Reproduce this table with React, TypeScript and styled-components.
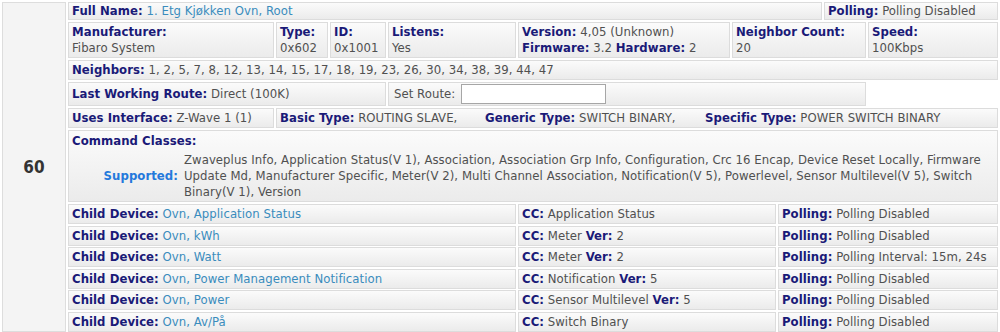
import React from 'react';
import styled, { createGlobalStyle } from 'styled-components';

const GlobalStyle = createGlobalStyle`
  html, body {
    margin: 0;
    padding: 0;
    background: #ffffff;
  }
  body {
    font-family: "DejaVu Sans Condensed", "DejaVu Sans", sans-serif;
    font-size: 13px;
    letter-spacing: 0.05px;
    color: #505050;
  }
  * { box-sizing: border-box; }
`;

const Page = styled.div`
  display: flex;
  gap: 2px;
  padding: 2px;
  width: 1000px;
`;

const IdCell = styled.div`
  width: 64px;
  flex: none;
  display: flex;
  align-items: center;
  justify-content: center;
  background: #f4f4f4;
  border: 1px solid #dddddd;
  font-weight: bold;
  font-size: 17px;
  color: #333333;
`;

const Body = styled.div`
  flex: 1;
  display: flex;
  flex-direction: column;
  gap: 2px;
`;

const Row = styled.div<{ $tight?: boolean }>`
  display: flex;
  gap: 2px;
  margin-top: ${p => (p.$tight ? '-0.4px' : '0')};
`;

const Cell = styled.div<{ $w?: number; $pad?: string }>`
  width: ${p => (p.$w ? `${p.$w}px` : 'auto')};
  flex: ${p => (p.$w ? 'none' : '1')};
  padding: ${p => p.$pad ?? '1px 3px'};
  line-height: 16px;
  white-space: nowrap;
  background: linear-gradient(to bottom, #fbfbfb 0%, #ebebeb 100%);
  border: 1px solid #dcdcdc;
`;

const Blank = styled.div<{ $w: number }>`
  width: ${p => p.$w}px;
  flex: none;
`;

const Label = styled.span`
  font-weight: bold;
  color: #1a1a78;
`;

const Value = styled.span`
  color: #505050;
`;

const Link = styled.span`
  color: #3a8cbd;
`;

const Line = styled.div``;

const RouteCell = styled(Cell)`
  display: flex;
  align-items: center;
  gap: 6px;
`;

const RouteInput = styled.input`
  width: 145px;
  height: 20px;
  border: 1px solid #a6a6a6;
  background: #ffffff;
  padding: 0 3px;
  margin: 0;
  font: inherit;
`;

const TypeCell = styled(Cell)`
  display: flex;
`;

const TypeItem = styled.span<{ $w?: number }>`
  width: ${p => (p.$w ? `${p.$w}px` : 'auto')};
  flex: none;
`;

const ClassesCell = styled(Cell)`
  padding: 2px 3px 1px;
  white-space: normal;
`;

const ClassesGrid = styled.div`
  display: grid;
  grid-template-columns: 106px 1fr;
  column-gap: 6px;
  margin-top: 3px;
`;

const Supported = styled.div`
  align-self: center;
  text-align: right;
  font-weight: bold;
  color: #2479dc;
`;

const ClassList = styled.div`
  color: #505050;
`;

const children = [
  { name: 'Ovn, Application Status', cc: 'Application Status', ver: '', poll: 'Polling Disabled' },
  { name: 'Ovn, kWh', cc: 'Meter', ver: '2', poll: 'Polling Disabled' },
  { name: 'Ovn, Watt', cc: 'Meter', ver: '2', poll: 'Polling Interval: 15m, 24s' },
  { name: 'Ovn, Power Management Notification', cc: 'Notification', ver: '5', poll: 'Polling Disabled' },
  { name: 'Ovn, Power', cc: 'Sensor Multilevel', ver: '5', poll: 'Polling Disabled' },
  { name: 'Ovn, Av/På', cc: 'Switch Binary', ver: '', poll: 'Polling Disabled' },
];

const classes =
  'Zwaveplus Info, Application Status(V 1), Association, Association Grp Info, Configuration, Crc 16 Encap, Device Reset Locally, Firmware Update Md, Manufacturer Specific, Meter(V 2), Multi Channel Association, Notification(V 5), Powerlevel, Sensor Multilevel(V 5), Switch Binary(V 1), Version';

const neighbors = [1, 2, 5, 7, 8, 12, 13, 14, 15, 17, 18, 19, 23, 26, 30, 34, 38, 39, 44, 47];

export default function App() {
  return (
    <>
      <GlobalStyle />
      <Page>
        <IdCell>60</IdCell>
        <Body>
          <Row>
            <Cell $w={754} $pad="0 3px">
              <Label>Full Name:</Label> <Link>1. Etg Kjøkken Ovn, Root</Link>
            </Cell>
            <Cell $w={174} $pad="0 3px">
              <Label>Polling:</Label> <Value>Polling Disabled</Value>
            </Cell>
          </Row>

          <Row>
            <Cell $w={206}>
              <Line><Label>Manufacturer:</Label></Line>
              <Line>Fibaro System</Line>
            </Cell>
            <Cell $w={52}>
              <Line><Label>Type:</Label></Line>
              <Line>0x602</Line>
            </Cell>
            <Cell $w={56}>
              <Line><Label>ID:</Label></Line>
              <Line>0x1001</Line>
            </Cell>
            <Cell $w={128}>
              <Line><Label>Listens:</Label></Line>
              <Line>Yes</Line>
            </Cell>
            <Cell $w={212}>
              <Line><Label>Version:</Label> 4,05 (Unknown)</Line>
              <Line><Label>Firmware:</Label> 3.2 <Label>Hardware:</Label> 2</Line>
            </Cell>
            <Cell $w={134}>
              <Line><Label>Neighbor Count:</Label></Line>
              <Line>20</Line>
            </Cell>
            <Cell $w={130}>
              <Line><Label>Speed:</Label></Line>
              <Line>100Kbps</Line>
            </Cell>
          </Row>

          <Row>
            <Cell>
              <Label>Neighbors:</Label> {neighbors.join(', ')}
            </Cell>
          </Row>

          <Row>
            <RouteCell $w={318}>
              <span><Label>Last Working Route:</Label> Direct (100K)</span>
            </RouteCell>
            <RouteCell $w={478} $pad="1px 5px">
              <span>Set Route:</span>
              <RouteInput type="text" />
            </RouteCell>
            <Blank $w={130} />
          </Row>

          <Row>
            <Cell $w={206}>
              <Label>Uses Interface:</Label> Z-Wave 1 (1)
            </Cell>
            <TypeCell>
              <TypeItem $w={205}><Label>Basic Type:</Label> ROUTING SLAVE,</TypeItem>
              <TypeItem $w={220}><Label>Generic Type:</Label> SWITCH BINARY,</TypeItem>
              <TypeItem><Label>Specific Type:</Label> POWER SWITCH BINARY</TypeItem>
            </TypeCell>
          </Row>

          <Row>
            <ClassesCell>
              <Label>Command Classes:</Label>
              <ClassesGrid>
                <Supported>Supported:</Supported>
                <ClassList>{classes}</ClassList>
              </ClassesGrid>
            </ClassesCell>
          </Row>

          {children.map((c, i) => (
            <Row key={c.name} $tight={i > 0}>
              <Cell $w={448}>
                <Label>Child Device:</Label> <Link>{c.name}</Link>
              </Cell>
              <Cell $w={258}>
                <Label>CC:</Label> {c.cc}
                {c.ver && <> <Label>Ver:</Label> {c.ver}</>}
              </Cell>
              <Cell $w={220}>
                <Label>Polling:</Label> <Value>{c.poll}</Value>
              </Cell>
            </Row>
          ))}
        </Body>
      </Page>
    </>
  );
}
